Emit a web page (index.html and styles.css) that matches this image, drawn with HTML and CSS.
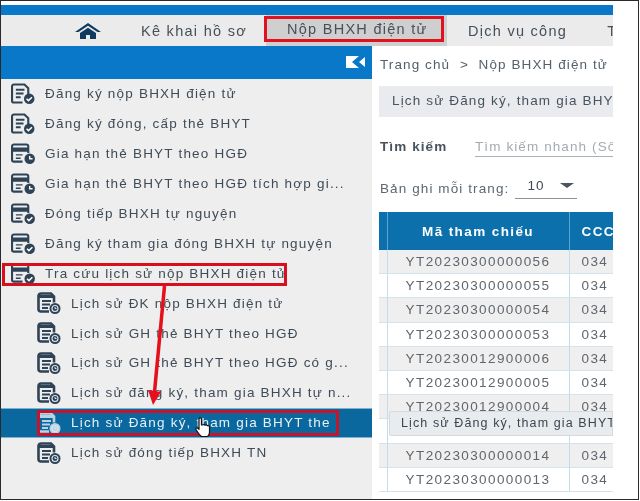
FILE: index.html
```html
<!DOCTYPE html>
<html lang="vi">
<head>
    <meta charset="UTF-8" />
    <meta name="viewport" content="width=device-width, initial-scale=1" />
    <title>Nộp BHXH điện tử</title>
    <link rel="stylesheet" href="styles.css">
</head>
<body>
    <svg class="icon-defs" width="0" height="0">
        <symbol id="i-doc" viewBox="0 0 26 22">
            <path d="M3 1.500h11l4 4v6M3 1.500a2 2 0 0 0-2 2v15a2 2 0 0 0 2 2h9" fill="none" stroke="currentColor" stroke-width="2.200"/>
            <path d="M5 7h9M5 11h8M5 15h5" stroke="currentColor" stroke-width="2"/>
            <circle cx="19" cy="16.500" r="5.500" fill="currentColor"/>
            <path d="M16.200 16.500l2 2 3.600-3.600" fill="none" stroke="#fff" stroke-width="1.600"/>
        </symbol>
        <symbol id="i-card-clock" viewBox="0 0 26 22">
            <path d="M3 1.500h13a2 2 0 0 1 2 2v7M3 1.500a2 2 0 0 0-2 2v14a2 2 0 0 0 2 2h9" fill="none" stroke="currentColor" stroke-width="2.200"/>
            <path d="M1 5.500h17v3H1zM5 12.500h7M5 16h5" fill="currentColor" stroke="currentColor" stroke-width="1.400"/>
            <circle cx="19.500" cy="16.500" r="5.500" fill="currentColor"/>
            <path d="M19.500 13.500v3h3" fill="none" stroke="#fff" stroke-width="1.400"/>
        </symbol>
        <symbol id="i-card-check" viewBox="0 0 26 22">
            <path d="M3 1.500h13a2 2 0 0 1 2 2v7M3 1.500a2 2 0 0 0-2 2v14a2 2 0 0 0 2 2h9" fill="none" stroke="currentColor" stroke-width="2.200"/>
            <path d="M1 5.500h17v3H1zM5 12.500h7M5 16h5" fill="currentColor" stroke="currentColor" stroke-width="1.400"/>
            <circle cx="19.500" cy="16.500" r="5.500" fill="currentColor"/>
            <path d="M16.700 16.500l2 2 3.600-3.600" fill="none" stroke="#fff" stroke-width="1.600"/>
        </symbol>
        <symbol id="i-history" viewBox="0 0 24 22">
            <path d="M4 1.500h10l3 3v6M4 1.500a2.500 2.500 0 0 0-2.500 2.500v13A2.500 2.500 0 0 0 4 19.500h8" fill="none" stroke="currentColor" stroke-width="2.600"/>
            <path d="M1 3h15v3H1zM5 8h9v2H5zM5 11.500h8v2H5zM5 15h6v2H5z" fill="currentColor"/>
            <circle cx="18" cy="16.500" r="5.500" fill="currentColor"/>
            <circle cx="18" cy="16.500" r="3" fill="none" stroke="#dbe6ee" stroke-width="1.100"/>
            <path d="M18 15v1.500h1.500" fill="none" stroke="#dbe6ee" stroke-width="1"/>
        </symbol>
    </svg>

    <div class="frame">
        <div class="top-strip"></div>

        <!-- MENU TOPO -->
        <nav class="nav">
            <svg class="home" viewBox="0 0 26 16" width="26" height="16">
                <path d="M13 0L0 9h3.500L13 2.800 22.500 9H26zM5 10v6h6v-4h4v4h6v-6l-8-5.200z" fill="#0f3a60"/>
            </svg>
            <a class="nav-item nav-first">Kê khai hồ sơ</a>
            <a class="nav-item nav-current">Nộp BHXH điện tử</a>
            <a class="nav-item nav-third">Dịch vụ công</a>
            <a class="nav-item nav-last">Tra cứu</a>
        </nav>

        <div class="content">
            <!-- MENU LATERAL -->
            <aside class="sidebar">
                <div class="side-head">
                    <svg viewBox="0 0 19 12" width="19" height="12">
                        <path d="M0 0h13L6 6l7 6H0zM19 1v10l-6-5z" fill="#fff"/>
                    </svg>
                </div>
                <ul class="side-list">
                    <li class="row"><svg class="ico"><use href="#i-doc"/></svg>Đăng ký nộp BHXH điện tử</li>
                    <li class="row"><svg class="ico"><use href="#i-doc"/></svg>Đăng ký đóng, cấp thẻ BHYT</li>
                    <li class="row"><svg class="ico"><use href="#i-card-clock"/></svg>Gia hạn thẻ BHYT theo HGĐ</li>
                    <li class="row"><svg class="ico"><use href="#i-card-clock"/></svg>Gia hạn thẻ BHYT theo HGĐ tích hợp gi...</li>
                    <li class="row"><svg class="ico"><use href="#i-card-check"/></svg>Đóng tiếp BHXH tự nguyện</li>
                    <li class="row"><svg class="ico"><use href="#i-card-check"/></svg>Đăng ký tham gia đóng BHXH tự nguyện</li>
                    <li class="row"><svg class="ico"><use href="#i-card-check"/></svg>Tra cứu lịch sử nộp BHXH điện tử</li>
                    <li class="row sub"><svg class="ico"><use href="#i-history"/></svg>Lịch sử ĐK nộp BHXH điện tử</li>
                    <li class="row sub"><svg class="ico"><use href="#i-history"/></svg>Lịch sử GH thẻ BHYT theo HGĐ</li>
                    <li class="row sub"><svg class="ico"><use href="#i-history"/></svg>Lịch sử GH thẻ BHYT theo HGĐ có g...</li>
                    <li class="row sub"><svg class="ico"><use href="#i-history"/></svg>Lịch sử đăng ký, tham gia BHXH tự n...</li>
                    <li class="row sub active"><svg class="ico"><use href="#i-history"/></svg>Lịch sử Đăng ký, tham gia BHYT the</li>
                    <li class="row sub"><svg class="ico"><use href="#i-history"/></svg>Lịch sử đóng tiếp BHXH TN</li>
                </ul>
            </aside>

            <!-- CONTEUDO -->
            <main class="main">
                <div class="crumbs">Trang chủ &nbsp;&gt;&nbsp; Nộp BHXH điện tử</div>
                <div class="title-bar">Lịch sử Đăng ký, tham gia BHYT theo HGĐ</div>
                <div class="search">
                    <span class="search-label">Tìm kiếm</span>
                    <span class="search-input">Tìm kiếm nhanh (Số hồ sơ)</span>
                </div>
                <div class="per-page">
                    <span class="per-page-label">Bản ghi mỗi trang:</span>
                    <span class="select">10<i class="caret"></i></span>
                </div>
                <table class="grid">
                    <colgroup><col class="c-a"><col class="c-b"><col class="c-c"></colgroup>
                    <thead>
                        <tr><th></th><th>Mã tham chiếu</th><th>CCCD</th></tr>
                    </thead>
                    <tbody>
                        <tr><td></td><td>YT20230300000056</td><td>034</td></tr>
                        <tr><td></td><td>YT20230300000055</td><td>034</td></tr>
                        <tr><td></td><td>YT20230300000054</td><td>034</td></tr>
                        <tr><td></td><td>YT20230300000053</td><td>034</td></tr>
                        <tr><td></td><td>YT20230012900006</td><td>034</td></tr>
                        <tr><td></td><td>YT20230012900005</td><td>034</td></tr>
                        <tr><td></td><td>YT20230012900004</td><td>034</td></tr>
                        <tr><td></td><td>&nbsp;</td><td>&nbsp;</td></tr>
                        <tr><td></td><td>YT20230300000014</td><td>034</td></tr>
                        <tr><td></td><td>YT20230300000013</td><td>034</td></tr>
                    </tbody>
                </table>
            </main>
        </div>
    </div>

    <!-- Anotações vermelhas por cima da tela -->
    <div class="mark mark-menu"></div>
    <div class="mark mark-tra-cuu"></div>
    <div class="mark mark-active"></div>
    <svg class="arrow" viewBox="0 0 640 501" width="640" height="501">
        <path d="M164.500 286L154.500 392" stroke="#e5101c" stroke-width="3.500" fill="none"/>
        <path d="M148 390L161 392L153 405z" fill="#e5101c"/>
    </svg>
    <svg class="hand" viewBox="0 0 20 21" width="20" height="21">
        <path d="M5 1.500c1-1 2.500-.5 2.500 1V8l1 0c1-.8 2-.5 2.500.2.800-.6 2-.3 2.400.5 1-.4 2.100.2 2.100 1.300v4.500c0 2.500-1 4.500-2.500 5H7.500C6 18.500 3.500 15 2 12.500c-.6-1.200.8-2.300 2-1.200l1 1z" fill="#fff" stroke="#111" stroke-width="1.200" stroke-linejoin="round"/>
    </svg>
    <div class="tooltip">Lịch sử Đăng ký, tham gia BHYT theo HGĐ</div>
</body>
</html>
```

FILE: styles.css
```css
html, body {
    overflow: hidden;
}

body {
    margin: 0;
    padding: 0;
    background: #fff;
    font-family: "Liberation Sans", Arial, sans-serif;
    color: #47535f;
    /* a captura original é levemente borrada */
    filter: blur(0.4px);
}

.icon-defs {
    position: absolute;
}

.frame {
    box-sizing: border-box;
    width: 639px;
    height: 500px;
    border: 1px solid #2a2a2a;
    background: #fff;
    overflow: hidden;
}

.top-strip {
    width: 612px;
    height: 10px;
    margin-top: 4px;
    background: #0a78c8;
}

/* Menu do topo */
.nav {
    display: flex;
    align-items: center;
    width: 612px;
    height: 31px;
    background: #ebebeb;
    overflow: hidden;
    white-space: nowrap;
    font-size: 14.500px;
    letter-spacing: 1.280px;
}

.home {
    flex: none;
    margin: 0 0 0 74px;
}

.nav-item {
    flex: none;
    color: #45505b;
}

.nav-first {
    margin-left: 40px;
}

.nav-current {
    align-self: stretch;
    display: flex;
    align-items: center;
    box-sizing: border-box;
    width: 181px;
    margin-left: 19px;
    padding: 0 0 4px 21px;
    background: #cfcfcf;
}

.nav-third {
    margin-left: 21px;
}

.nav-last {
    margin-left: 40px;
}

.content {
    display: flex;
    width: 612px;
    height: 453px;
}

/* Menu lateral */
.sidebar {
    flex: none;
    width: 371px;
    background: #eeeeee;
}

.side-head {
    display: flex;
    align-items: center;
    justify-content: flex-end;
    box-sizing: border-box;
    height: 33px;
    padding: 0 7px 2px 0;
    background: #0a78c8;
}

.side-list {
    margin: 0;
    padding: 0;
    list-style: none;
}

.row {
    display: flex;
    align-items: center;
    box-sizing: border-box;
    height: 29.900px;
    padding-left: 10px;
    font-size: 13.500px;
    letter-spacing: 1.200px;
    white-space: nowrap;
    overflow: hidden;
    color: #3f4b57;
}

.ico {
    flex: none;
    width: 25px;
    height: 21px;
    margin-right: 9px;
    color: #2f4356;
}

.sub {
    padding-left: 36px;
}

.sub .ico {
    width: 24px;
    height: 22px;
    margin-right: 10px;
}

.active {
    background: #0b689f;
    border-top: 1px solid #7fb0cf;
    border-bottom: 1px solid #7fb0cf;
    color: #e6f0f6;
}

.active .ico {
    color: #b9d3e3;
}

/* Conteúdo */
.main {
    flex: 1;
    min-width: 0;
    padding-left: 7px;
    overflow: hidden;
    white-space: nowrap;
}

.crumbs {
    height: 40px;
    padding-left: 1px;
    line-height: 38px;
    font-size: 13.500px;
    letter-spacing: 1.100px;
    color: #55606b;
}

.title-bar {
    box-sizing: border-box;
    height: 31px;
    line-height: 30px;
    padding-left: 13px;
    background: #e9ebee;
    font-size: 13.500px;
    letter-spacing: 1.150px;
    overflow: hidden;
}

.search {
    display: flex;
    height: 41px;
    margin-top: 17px;
    padding-left: 1px;
    font-size: 13.500px;
    letter-spacing: 1.100px;
}

.search-label {
    flex: none;
    width: 95px;
    line-height: 26px;
    font-weight: bold;
}

.search-input {
    flex: 1;
    height: 22px;
    line-height: 26px;
    border-bottom: 1px solid #aab0b6;
    color: #a4abb2;
    overflow: hidden;
}

.per-page {
    display: flex;
    height: 37px;
    padding-left: 1px;
    font-size: 13.500px;
    letter-spacing: 1.100px;
    color: #5d6771;
}

.per-page-label {
    line-height: 27px;
}

.select {
    display: flex;
    align-items: center;
    box-sizing: border-box;
    width: 62px;
    height: 24px;
    margin-left: 6px;
    padding: 0 0 2px 12px;
    border-bottom: 1px solid #8b9299;
    color: #3f4a55;
}

.caret {
    width: 0;
    height: 0;
    margin-left: 15px;
    border: 7px solid transparent;
    border-top: 5px solid #4a5560;
    border-bottom: 0;
}

/* Tabela */
.grid {
    width: 234px;
    border-collapse: collapse;
    table-layout: fixed;
    font-size: 13.500px;
    letter-spacing: 1.400px;
}

.c-a {
    width: 8px;
}

.c-b {
    width: 182px;
}

.grid th {
    height: 38px;
    padding: 0;
    background: #0b70ac;
    border-right: 1px solid #5fa2cc;
    color: #fff;
    font-weight: bold;
    text-align: center;
    overflow: hidden;
}

.grid td {
    height: 23.200px;
    padding: 0;
    border-right: 1px solid #c4dbe9;
    border-bottom: 1px solid #d3e3ee;
    color: #5f666d;
    text-align: center;
    overflow: hidden;
}

.grid td:last-child, .grid th:last-child {
    border-right: 0;
    text-align: left;
    padding-left: 12px;
}

.grid tbody tr:nth-child(odd) {
    background: #efefef;
}

/* Anotações por cima */
.mark {
    position: absolute;
    box-sizing: border-box;
    border: 3px solid #cc1424;
}

.mark-menu {
    left: 264px;
    top: 16px;
    width: 180px;
    height: 26px;
    border-color: #e0121f;
}

.mark-tra-cuu {
    left: 2px;
    top: 263px;
    width: 285px;
    height: 23px;
    border-color: #d8101e;
}

.mark-active {
    left: 37px;
    top: 410px;
    width: 302px;
    height: 26px;
    border-color: #c3152b;
}

.arrow {
    position: absolute;
    left: 0;
    top: 0;
}

.hand {
    position: absolute;
    left: 194px;
    top: 417px;
}

.tooltip {
    position: absolute;
    left: 389px;
    top: 411px;
    box-sizing: border-box;
    width: 224px;
    height: 25px;
    padding-left: 11px;
    line-height: 22px;
    background: #e8ecef;
    border: 1px solid #d5dadf;
    border-radius: 2px 0 0 2px;
    font-size: 12.500px;
    letter-spacing: 1.100px;
    white-space: nowrap;
    overflow: hidden;
    color: #3b4550;
}
```
